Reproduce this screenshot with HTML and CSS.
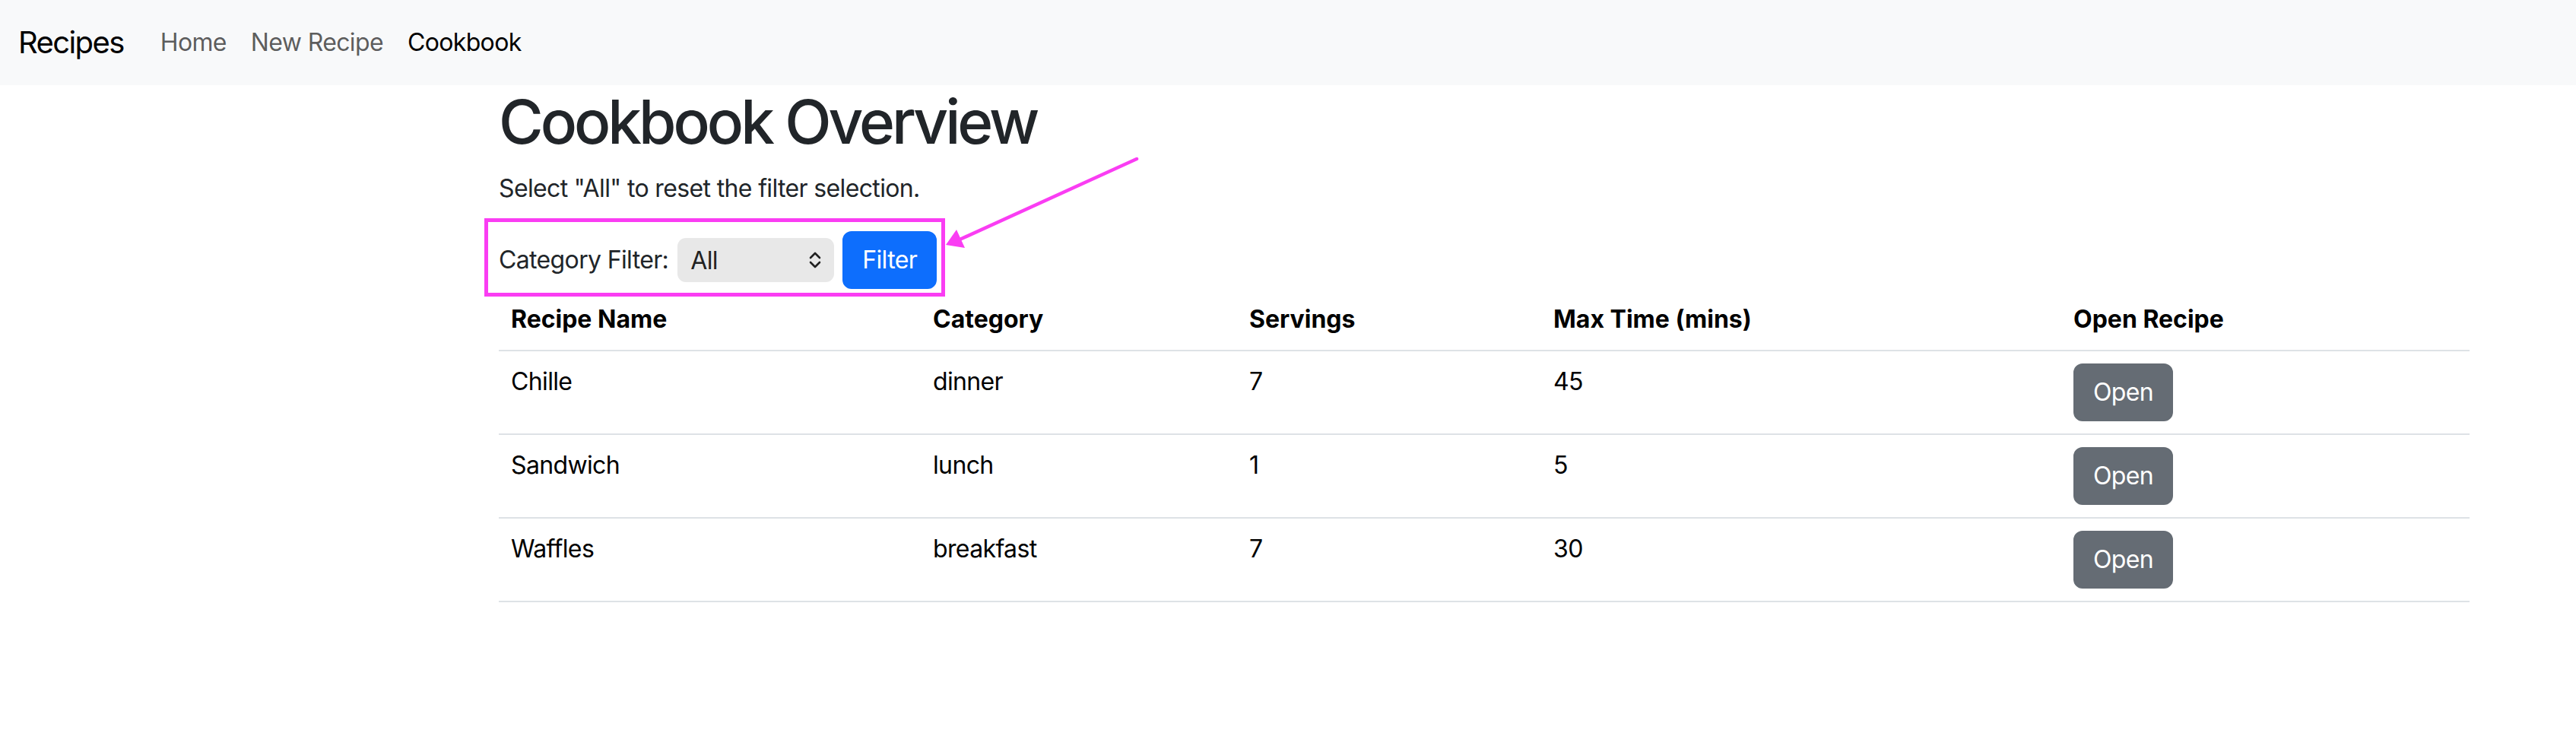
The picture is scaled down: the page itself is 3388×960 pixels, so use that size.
FILE: index.html
```html
<!DOCTYPE html>
<html lang="en">
<head>
<meta charset="utf-8">
<title>Cookbook Overview</title>
<link rel="stylesheet" href="styles.css">
</head>
<body>
<nav class="navbar">
  <a class="brand" href="#">Recipes</a>
  <ul class="nav">
    <li><a class="nav-link" href="#">Home</a></li>
    <li><a class="nav-link" href="#">New Recipe</a></li>
    <li><a class="nav-link active" href="#">Cookbook</a></li>
  </ul>
</nav>
<main class="content">
  <h1 class="title">Cookbook Overview</h1>
  <p class="hint">Select "All" to reset the filter selection.</p>
  <form class="filter">
    <label class="filter-label" for="cat">Category Filter:</label>
    <div class="select-wrap">
      <select id="cat" class="select">
        <option>All</option>
        <option>breakfast</option>
        <option>lunch</option>
        <option>dinner</option>
      </select>
      <svg class="chevron" viewBox="0 0 16 24" width="16" height="24" aria-hidden="true">
        <path d="M2 9 L8 3 L14 9 M2 15 L8 21 L14 15" fill="none" stroke="#222" stroke-width="2.6" stroke-linecap="round" stroke-linejoin="round"/>
      </svg>
    </div>
    <button type="button" class="btn btn-primary">Filter</button>
  </form>
  <table class="table">
    <colgroup>
      <col class="c-name"><col class="c-cat"><col class="c-serv"><col class="c-time"><col class="c-open">
    </colgroup>
    <thead>
      <tr><th>Recipe Name</th><th>Category</th><th>Servings</th><th>Max Time (mins)</th><th>Open Recipe</th></tr>
    </thead>
    <tbody>
      <tr><td>Chille</td><td>dinner</td><td>7</td><td>45</td><td><button type="button" class="btn btn-secondary">Open</button></td></tr>
      <tr><td>Sandwich</td><td>lunch</td><td>1</td><td>5</td><td><button type="button" class="btn btn-secondary">Open</button></td></tr>
      <tr><td>Waffles</td><td>breakfast</td><td>7</td><td>30</td><td><button type="button" class="btn btn-secondary">Open</button></td></tr>
    </tbody>
  </table>
</main>
<svg class="annotation" width="3388" height="960" viewBox="0 0 3388 960" aria-hidden="true">
  <rect x="639.5" y="289.5" width="601" height="98" fill="none" stroke="#fa3df3" stroke-width="5"/>
  <line x1="1495" y1="209" x2="1260" y2="316" stroke="#fa3df3" stroke-width="4.5" stroke-linecap="round"/>
  <polygon points="1244,322 1258,302 1269,326" fill="#fa3df3"/>
</svg>
</body>
</html>
```

FILE: styles.css
```css
* { box-sizing: border-box; }

html, body {
  margin: 0;
  padding: 0;
}

body {
  position: relative;
  font-family: Inter, "Noto Sans", "Liberation Sans", sans-serif;
  font-size: 32px;
  line-height: 48px;
  letter-spacing: -0.02em;
  color: #212529;
  background: #fff;
  width: 3388px;
  height: 960px;
  overflow: hidden;
}

/* navbar */
.navbar {
  display: flex;
  align-items: center;
  height: 112px;
  padding: 0 24px;
  background: #f8f9fa;
}

.brand {
  font-size: 40px;
  line-height: 60px;
  padding: 10px 0;
  margin-right: 32px;
  letter-spacing: -0.04em;
  color: #000;
  text-decoration: none;
}

.nav {
  display: flex;
  list-style: none;
  margin: 0;
  padding: 0;
}

.nav-link {
  display: block;
  padding: 16px 16px;
  font-size: 32px;
  line-height: 48px;
  color: rgba(0, 0, 0, 0.65);
  text-decoration: none;
}

.nav-link.active { color: #000; }

/* content */
.content {
  margin-left: 656px;
  width: 2592px;
}

.title {
  margin: 0 0 16px;
  font-size: 80px;
  line-height: 96px;
  font-weight: 500;
  letter-spacing: -0.05em;
  color: #212529;
}

.hint {
  margin: 0 0 32px;
}

.filter {
  display: flex;
  align-items: center;
  margin: 0;
}

.filter-label {
  margin-right: 12px;
}

.select-wrap {
  position: relative;
  margin-right: 11px;
}

.select {
  appearance: none;
  -webkit-appearance: none;
  display: block;
  width: 206px;
  height: 58px;
  padding: 0 0 0 17px;
  border: 0;
  border-radius: 11px;
  background: #e8e8e8;
  font-family: inherit;
  font-size: 32px;
  letter-spacing: -0.02em;
  color: #222;
}

.chevron {
  position: absolute;
  right: 17px;
  top: 17px;
  pointer-events: none;
}

.btn {
  display: inline-block;
  padding: 12px 24px;
  font-family: inherit;
  font-size: 32px;
  line-height: 48px;
  letter-spacing: -0.02em;
  border: 2px solid transparent;
  border-radius: 12px;
  color: #fff;
  cursor: pointer;
}

.btn-primary {
  background: #0d6efd;
  border-color: #0d6efd;
}

.btn-secondary {
  background: #656c74;
  border-color: #656c74;
}

/* table */
.table {
  width: 100%;
  table-layout: fixed;
  border-collapse: collapse;
  color: #000;
}

.c-name { width: 555px; }
.c-cat { width: 416px; }
.c-serv { width: 400px; }
.c-time { width: 684px; }
.c-open { width: 537px; }

.table th,
.table td {
  padding: 16px;
  text-align: left;
  vertical-align: top;
  border-bottom: 2px solid #dee2e6;
}

.table th {
  font-weight: 700;
  letter-spacing: 0;
}

/* annotation overlay */
.annotation {
  position: absolute;
  left: 0;
  top: 0;
  pointer-events: none;
}
```
